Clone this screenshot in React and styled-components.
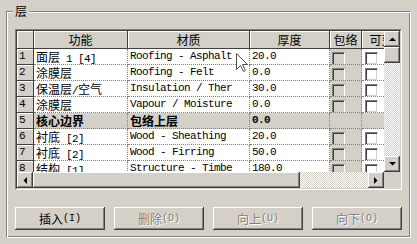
import React from 'react';
import styled, { createGlobalStyle } from 'styled-components';

const GlobalStyle = createGlobalStyle`
  body {
    margin: 0;
    background: #d4d0c8;
  }
`;

const Page = styled.div`
  position: relative;
  width: 417px;
  height: 244px;
  box-sizing: border-box;
  padding: 11px 6px 0 6px;
  background: #d4d0c8;
  font-family: "Liberation Mono", "Noto Sans CJK SC", monospace;
  overflow: hidden;
`;

const Group = styled.div`
  position: relative;
  box-sizing: border-box;
  width: 405px;
  height: 227px;
  border: 1px solid #808080;
  border-right-color: #fff;
  border-bottom-color: #fff;
  box-shadow: inset 1px 1px #fff, inset -1px -1px #808080;
  padding: 17px 8px 0;
  display: flex;
  flex-direction: column;
  gap: 17px;
`;

const Legend = styled.div`
  position: absolute;
  top: -8px;
  left: 6px;
  padding: 0 2px;
  background: #d4d0c8;
  font: 12px/14px "Noto Sans CJK SC", sans-serif;
  color: #000;
`;

const Han = styled.span`
  font-family: "Noto Sans CJK SC", sans-serif;
  font-size: 12px;
  letter-spacing: 0;
`;

const GridFrame = styled.div`
  width: 387px;
  height: 161px;
  box-sizing: border-box;
  border: 1px solid;
  border-color: #808080 #fff #fff #808080;
`;

const GridInner = styled.div`
  height: 100%;
  box-sizing: border-box;
  border: 1px solid;
  border-color: #404040 #d4d0c8 #d4d0c8 #404040;
  display: grid;
  grid-template-columns: 367px 16px;
  grid-template-rows: 141px 16px;
  background: #fff;
`;

const Viewport = styled.div`
  overflow: hidden;
  background: #fff;
`;

const Row = styled.div`
  display: flex;
  height: ${p => (p.$head ? 18 : 16)}px;
  width: 440px;
  font-weight: ${p => (p.$band ? 'bold' : 'normal')};
  background: ${p => (p.$band ? '#d4d0c8' : '#fff')};
`;

const raised = `
  background: #d4d0c8;
  border-right: 1px solid #404040;
  border-bottom: 1px solid #404040;
  box-shadow: inset 1px 1px #fff;
`;

const RowNum = styled.div`
  ${raised}
  flex: none;
  width: 17px;
  box-sizing: border-box;
  padding-left: 2px;
  font-size: 11px;
  letter-spacing: -0.6px;
  line-height: 15px;
  font-weight: normal;
  color: #000;
`;

const HeadCell = styled.div`
  ${raised}
  flex: none;
  width: ${p => p.$w}px;
  box-sizing: border-box;
  text-align: center;
  font: 12px/17px "Noto Sans CJK SC", sans-serif;
  white-space: nowrap;
  overflow: hidden;
  color: #000;
`;

const Cell = styled.div`
  flex: none;
  width: ${p => p.$w}px;
  box-sizing: border-box;
  padding-left: 2px;
  border-right: 1px dotted #808080;
  border-bottom: 1px dotted #808080;
  background: ${p => (p.$shade ? '#d4d0c8' : 'transparent')};
  font-size: 11px;
  letter-spacing: -0.6px;
  line-height: 15px;
  white-space: nowrap;
  overflow: hidden;
  color: #000;
`;

const Check = styled.div`
  width: 13px;
  height: 13px;
  box-sizing: border-box;
  margin-top: 3px;
  border: 1px solid;
  border-color: #808080 #fff #fff #808080;
  box-shadow: inset 1px 1px #404040, inset -1px -1px #d4d0c8;
  background: ${p => (p.$off ? '#d4d0c8' : '#fff')};
`;

const VScroll = styled.div`
  display: flex;
  flex-direction: column;
`;

const HScroll = styled.div`
  display: flex;
`;

const Corner = styled.div`
  background: #d4d0c8;
`;

const bevel = `
  background: #d4d0c8;
  box-shadow: inset -1px -1px #404040, inset 1px 1px #fff, inset -2px -2px #808080;
`;

const ScrollBtn = styled.div`
  ${bevel}
  flex: none;
  width: 16px;
  height: 16px;
  display: flex;
  align-items: center;
  justify-content: center;
`;

const Thumb = styled.div`
  ${bevel}
  flex: none;
  width: ${p => p.$w || 16}px;
  height: 16px;
`;

const Track = styled.div`
  flex: 1;
  background-image: conic-gradient(#fff 25%, #d4d0c8 0 50%, #fff 0 75%, #d4d0c8 0);
  background-size: 2px 2px;
`;

const ButtonRow = styled.div`
  display: flex;
  gap: 9px;
`;

const PushButton = styled.div`
  ${bevel}
  width: 90px;
  height: 23px;
  display: flex;
  align-items: center;
  justify-content: center;
  font-size: 10px;
  color: ${p => (p.$off ? '#808080' : '#000')};
  text-shadow: ${p => (p.$off ? '1px 1px #fff' : 'none')};
`;

const Pointer = styled.svg`
  position: absolute;
  left: 236px;
  top: 53px;
`;

const ARROWS = {
  up: '0,5 3.5,1.5 7,5',
  down: '0,1 3.5,4.5 7,1',
  left: '5,0 1.5,3.5 5,7',
  right: '1,0 4.5,3.5 1,7',
};

const Arrow = ({ dir }) => {
  const wide = dir === 'up' || dir === 'down';
  return (
    <svg width={wide ? 7 : 6} height={wide ? 6 : 7}>
      <polygon points={ARROWS[dir]} fill="#000" />
    </svg>
  );
};

const mix = text =>
  text.split(/([\u3400-\u9fff]+)/).map((part, i) =>
    /[\u3400-\u9fff]/.test(part) ? <Han key={i}>{part}</Han> : part
  );

const COLS = [94, 122, 80, 32, 40];
const HEADS = ['功能', '材质', '厚度', '包络', '可变'];

const rows = [
  ['1', '面层 1 [4]', 'Roofing - Asphalt', '20.0'],
  ['2', '涂膜层', 'Roofing - Felt', '0.0'],
  ['3', '保温层/空气', 'Insulation / Ther', '30.0'],
  ['4', '涂膜层', 'Vapour / Moisture', '0.0'],
  ['5', '核心边界', '包络上层', '0.0', true],
  ['6', '衬底 [2]', 'Wood - Sheathing', '20.0'],
  ['7', '衬底 [2]', 'Wood - Firring', '50.0'],
  ['8', '结构 [1]', 'Structure - Timbe', '180.0'],
];

function App() {
  return (
    <Page>
      <GlobalStyle />
      <Group>
        <Legend>层</Legend>
        <GridFrame>
          <GridInner>
            <Viewport>
              <Row $head>
                <RowNum />
                {HEADS.map((h, i) => (
                  <HeadCell key={h} $w={COLS[i]}>{h}</HeadCell>
                ))}
              </Row>
              {rows.map(([n, fn, mat, thick, band]) => (
                <Row key={n} $band={band}>
                  <RowNum>{n}</RowNum>
                  <Cell $w={COLS[0]}>{mix(fn)}</Cell>
                  <Cell $w={COLS[1]}>{mix(mat)}</Cell>
                  <Cell $w={COLS[2]}>{thick}</Cell>
                  <Cell $w={COLS[3]} $shade>{!band && <Check $off />}</Cell>
                  <Cell $w={COLS[4]} style={{ paddingLeft: 3 }}>{!band && <Check />}</Cell>
                </Row>
              ))}
            </Viewport>
            <VScroll>
              <ScrollBtn><Arrow dir="up" /></ScrollBtn>
              <Thumb />
              <Track />
              <ScrollBtn><Arrow dir="down" /></ScrollBtn>
            </VScroll>
            <HScroll>
              <ScrollBtn><Arrow dir="left" /></ScrollBtn>
              <Thumb $w={267} />
              <Track />
              <ScrollBtn><Arrow dir="right" /></ScrollBtn>
            </HScroll>
            <Corner />
          </GridInner>
        </GridFrame>
        <ButtonRow>
          <PushButton>{mix('插入')}(I)</PushButton>
          <PushButton $off>{mix('删除')}(D)</PushButton>
          <PushButton $off>{mix('向上')}(U)</PushButton>
          <PushButton $off>{mix('向下')}(O)</PushButton>
        </ButtonRow>
      </Group>
      <Pointer width="13" height="20" viewBox="0 0 13 20">
        <polygon
          points="0.5,0.5 0.5,16.5 4.5,12.5 7.5,18.5 9.5,17.5 6.5,11.5 11.5,11.5"
          fill="#fff"
          stroke="#505050"
          strokeWidth="1"
        />
      </Pointer>
    </Page>
  );
}

export default App;
